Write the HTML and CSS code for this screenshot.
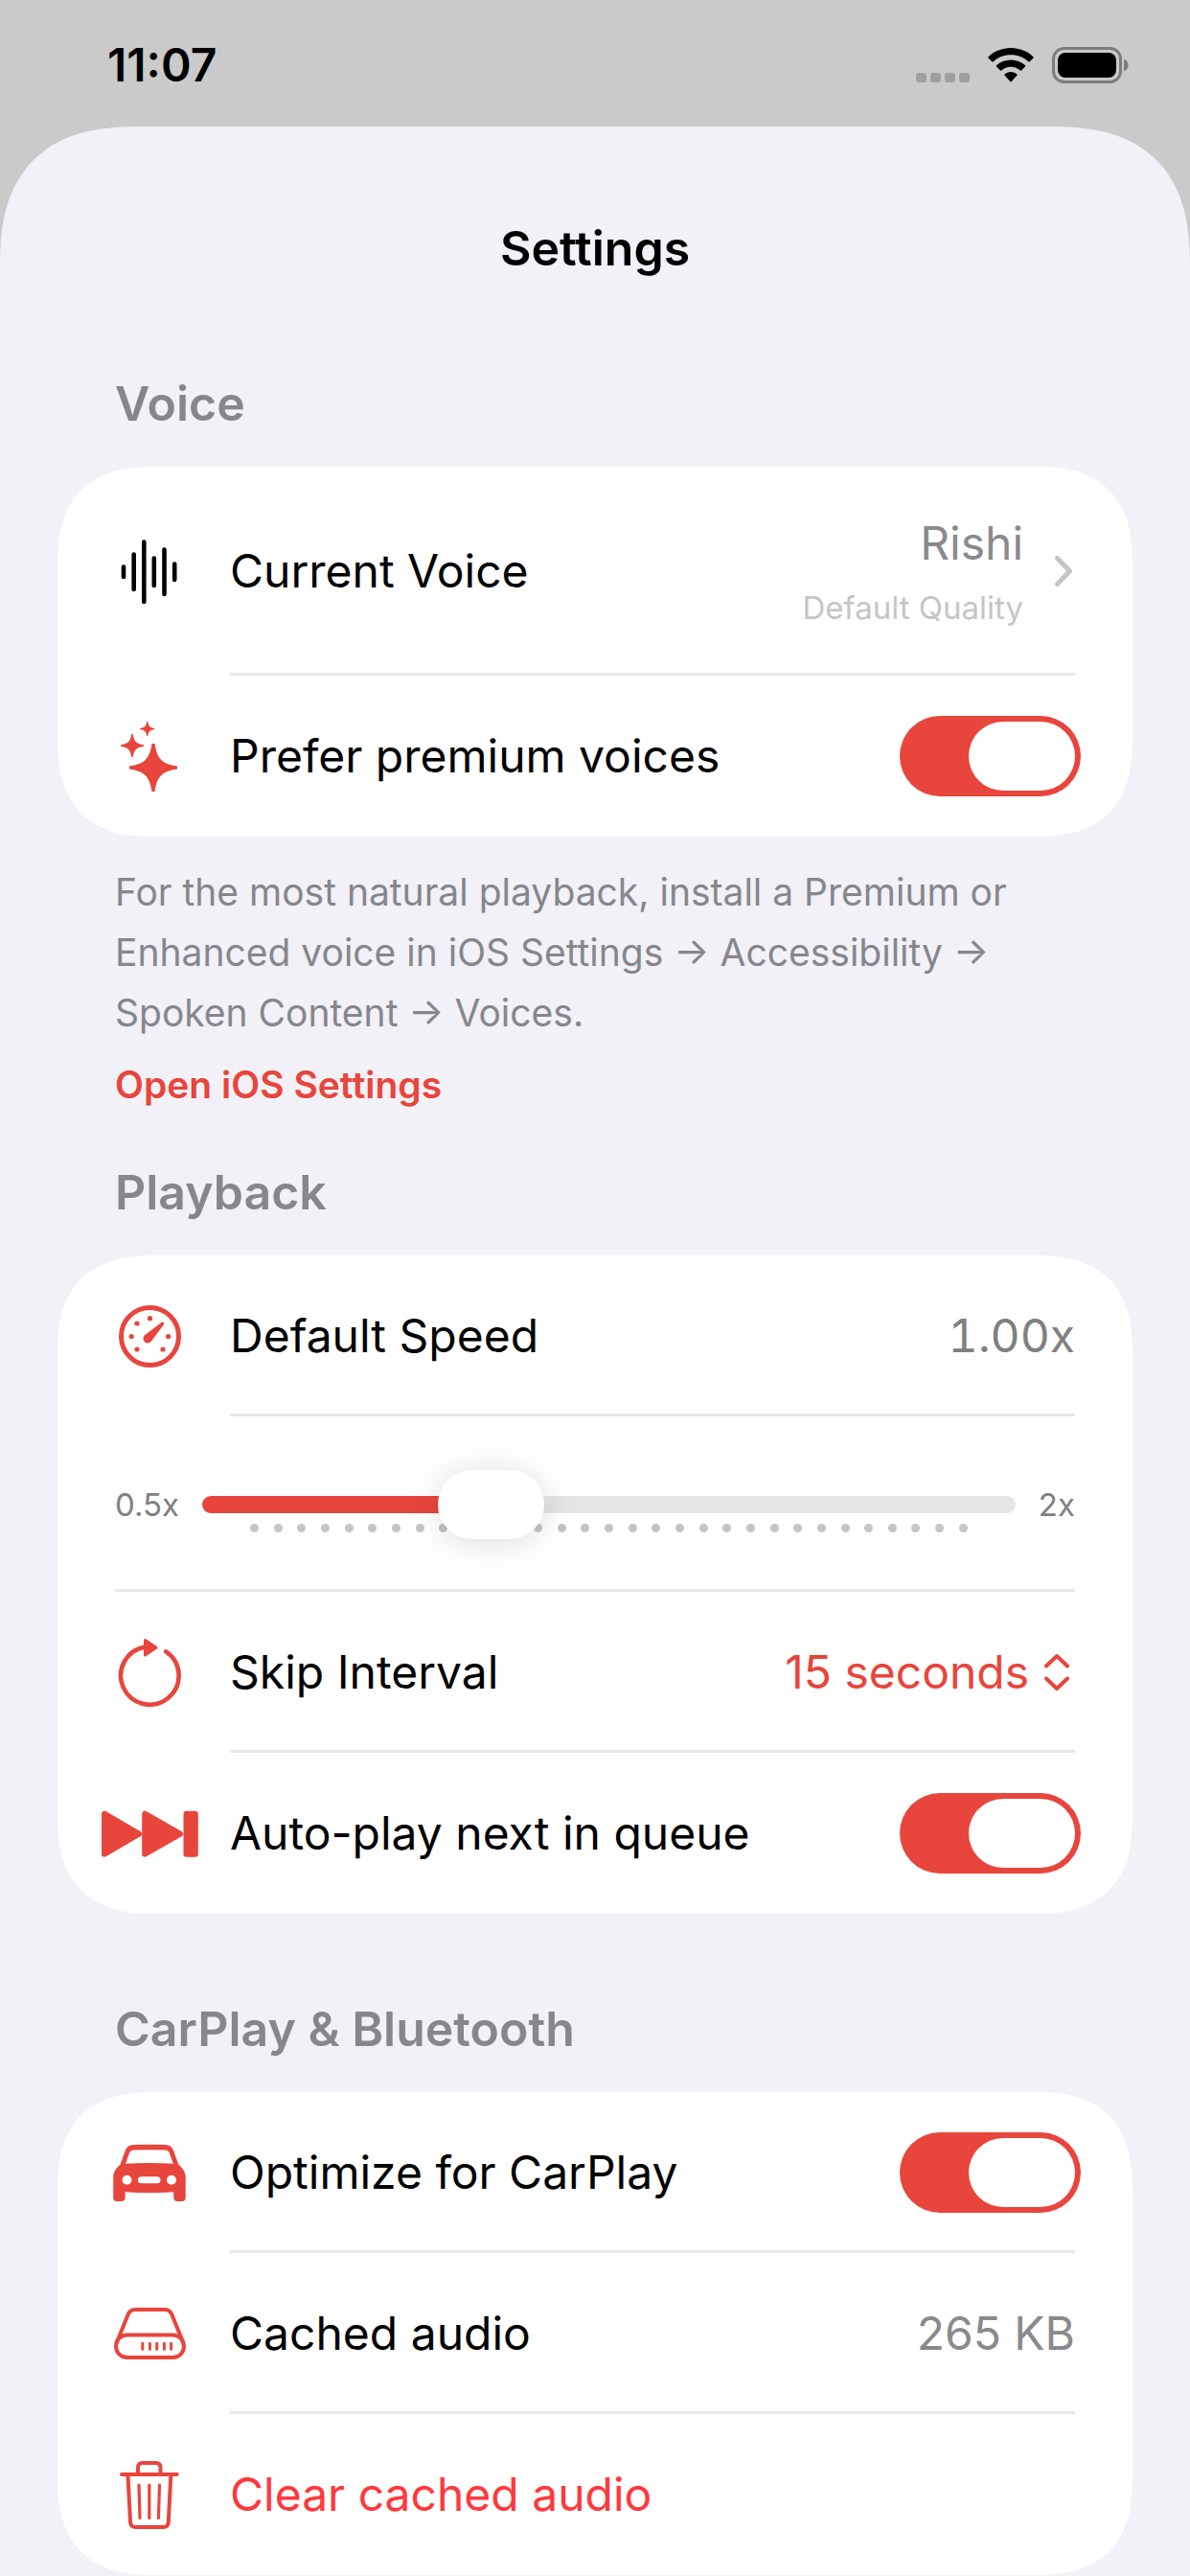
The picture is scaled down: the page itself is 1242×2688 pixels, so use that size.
FILE: index.html
```html
<!DOCTYPE html>
<html lang="en">
<head>
    <meta charset="UTF-8">
    <meta name="viewport" content="width=device-width, initial-scale=1">
    <title>Settings</title>
    <link rel="stylesheet" href="styles.css">
</head>
<body>
    <div class="status-bar">
        <span class="time">11:07</span>
        <div class="status-icons">
            <svg width="56" height="38" viewBox="0 0 56 38" fill="#a0a0a0">
                <rect x="0" y="27" width="11" height="10" rx="3"/>
                <rect x="15" y="27" width="11" height="10" rx="3"/>
                <rect x="30" y="27" width="11" height="10" rx="3"/>
                <rect x="45" y="27" width="11" height="10" rx="3"/>
            </svg>
            <svg width="48" height="38" viewBox="0 0 48 38">
                <path d="M24 1C33 1 41.500 4.500 47.500 10.200Q48 10.800 47.500 11.400L43.700 15.200Q43 15.800 42.300 15.200C37.500 10.800 31 8.200 24 8.200S10.500 10.800 5.700 15.200Q5 15.800 4.300 15.200L.5 11.400Q0 10.800 .5 10.200C6.500 4.500 15 1 24 1Z"/>
                <path d="M24 13.500C29.800 13.500 35 15.700 39 19.300Q39.600 19.900 39 20.500L35 24.500Q34.400 25 33.800 24.500C31.200 22.200 27.800 20.700 24 20.700S16.800 22.200 14.200 24.500Q13.600 25 13 24.500L9 20.500Q8.400 19.900 9 19.300C13 15.700 18.200 13.500 24 13.500Z"/>
                <path d="M24 26C26.500 26 28.700 26.900 30.500 28.400Q31 29 30.500 29.600L24.700 36Q24 36.700 23.300 36L17.500 29.600Q17 29 17.500 28.400C19.300 26.900 21.500 26 24 26Z"/>
            </svg>
            <svg width="80" height="38" viewBox="0 0 80 38">
                <rect x="1.500" y="1.500" width="70" height="35" rx="11" fill="none" stroke="#7c7c7c" stroke-width="3"/>
                <rect x="6" y="6" width="61" height="26" rx="8"/>
                <path d="M75 12.500Q79.500 14.500 79.500 19T75 25.500Z" fill="#7c7c7c"/>
            </svg>
        </div>
    </div>

    <main class="sheet">
        <h1>Settings</h1>

        <section>
            <h2>Voice</h2>
            <div class="card">
                <a class="row row-tall" href="#voice">
                    <svg class="icon" viewBox="0 0 104 80" fill="none" stroke="#000" stroke-width="4.600" stroke-linecap="round">
                        <path d="M25 35.500V46M35.700 22.500V59M46.300 9.500V72M56.800 26.500V55M67.500 17.500V64M78.200 32.500V49"/>
                    </svg>
                    <span class="row-body">
                        <span>Current Voice</span>
                        <span class="voice">
                            <span class="value">Rishi</span>
                            <span class="quality">Default Quality</span>
                        </span>
                        <svg class="chevron" width="22" height="34" viewBox="0 0 22 34" fill="none" stroke="#c5c5c7" stroke-width="5" stroke-linecap="round" stroke-linejoin="round">
                            <path d="M3.500 3.500L16.500 17L3.500 30.500"/>
                        </svg>
                    </span>
                </a>
                <div class="row">
                    <svg class="icon" viewBox="0 0 104 80">
                        <defs>
                            <path id="star" d="M1.500-25C4-9 9-4 25-1.500V1.500C9 4 4 9 1.500 25H-1.500C-4 9-9 4-25 1.500V-1.500C-9-4-4-9-1.500-25Z"/>
                        </defs>
                        <use href="#star" transform="translate(56 52)"/>
                        <use href="#star" transform="translate(34 29) scale(.48)"/>
                        <use href="#star" transform="translate(49.700 11.500) scale(.31)"/>
                    </svg>
                    <div class="row-body">
                        <label for="premium">Prefer premium voices</label>
                        <input class="toggle" id="premium" type="checkbox" role="switch" checked>
                    </div>
                </div>
            </div>
            <div class="note">
                <p>For the most natural playback, install a Premium or Enhanced voice in iOS Settings → Accessibility → Spoken Content → Voices.</p>
                <a href="#ios-settings">Open iOS Settings</a>
            </div>
        </section>

        <section>
            <h2>Playback</h2>
            <div class="card">
                <div class="row">
                    <svg class="icon" viewBox="0 0 104 80">
                        <circle cx="52.500" cy="40.500" r="30" fill="none" stroke="#e8453c" stroke-width="5"/>
                        <circle cx="52.500" cy="21.700" r="2.600"/>
                        <circle cx="39" cy="27" r="2.600"/>
                        <circle cx="33.200" cy="40.500" r="2.600"/>
                        <circle cx="71.600" cy="40.500" r="2.600"/>
                        <circle cx="39" cy="54" r="2.600"/>
                        <circle cx="66" cy="54" r="2.600"/>
                        <path d="M47 39.300L64.800 25.700Q67.600 24.800 67.200 27.800L54 45.500A4.700 4.700 0 1 1 47 39.300Z"/>
                    </svg>
                    <div class="row-body">
                        <label for="speed">Default Speed</label>
                        <output class="value value-number" for="speed">1.00x</output>
                    </div>
                </div>
                <div class="row row-slider">
                    <div class="row-body">
                        <span>0.5x</span>
                        <div class="slider">
                            <div class="ticks">
                                <i></i><i></i><i></i><i></i><i></i><i></i><i></i><i></i><i></i><i></i>
                                <i></i><i></i><i></i><i></i><i></i><i></i><i></i><i></i><i></i><i></i>
                                <i></i><i></i><i></i><i></i><i></i><i></i><i></i><i></i><i></i><i></i>
                                <i></i>
                            </div>
                            <input id="speed" type="range" min="0.5" max="2" step="0.05" value="1">
                        </div>
                        <span>2x</span>
                    </div>
                </div>
                <div class="row">
                    <svg class="icon" viewBox="0 0 104 80">
                        <path d="M69.200 18.300A30.300 30.300 0 1 1 48 13.500" fill="none" stroke="#e8453c" stroke-width="4.600" stroke-linecap="round"/>
                        <path d="M47.500 6.500V22L59 14.300Z" stroke="#e8453c" stroke-width="3" stroke-linejoin="round"/>
                    </svg>
                    <div class="row-body">
                        <label for="skip">Skip Interval</label>
                        <select id="skip">
                            <option selected>15 seconds</option>
                            <option>30 seconds</option>
                        </select>
                        <svg class="updown" width="26" height="40" viewBox="0 0 26 40" fill="none" stroke="#e8453c" stroke-width="4" stroke-linecap="round" stroke-linejoin="round">
                            <path d="M2 13.500L13 3L24 13.500M2 26.500L13 37L24 26.500"/>
                        </svg>
                    </div>
                </div>
                <div class="row">
                    <svg class="icon" viewBox="0 0 104 80" stroke="#e8453c" stroke-width="6" stroke-linejoin="round">
                        <path d="M5 19.700V61.700L41 40.700ZM47.200 19.700V61.700L84 40.700ZM90.500 19.700H99.800V61.700H90.500Z"/>
                    </svg>
                    <div class="row-body">
                        <label for="autoplay">Auto-play next in queue</label>
                        <input class="toggle" id="autoplay" type="checkbox" role="switch" checked>
                    </div>
                </div>
            </div>
        </section>

        <section class="section-last">
            <h2>CarPlay &amp; Bluetooth</h2>
            <div class="card">
                <div class="row">
                    <svg class="icon" viewBox="0 0 104 80">
                        <path fill-rule="evenodd" d="M36 11Q52 10.300 68 11C73 11.300 75.500 13 77 17L82.500 32C87 35.500 89.700 39.500 89.700 45V66Q89.700 70 86 70H81Q77.200 70 77.200 66V60.300Q52 62.300 26.600 60.300V66Q26.600 70 22.800 70H17.900Q14.200 70 14.200 66V45C14.200 39.500 17 35.500 21.300 32L26.800 17C28.300 13 31 11.300 36 11ZM36.500 16.500C33 16.700 31.700 17.600 30.800 20.300L27 30.800Q52 29.200 76.800 30.800L73 20.300C72.200 17.600 71 16.700 67.500 16.500Q52 15.900 36.500 16.500ZM28.500 42.700A5 5 0 1 0 28.500 52.700A5 5 0 1 0 28.500 42.700ZM75 42.700A5 5 0 1 0 75 52.700A5 5 0 1 0 75 42.700ZM43.400 44.200A3.500 3.500 0 0 0 43.400 51.200H60A3.500 3.500 0 0 0 60 44.200Z"/>
                    </svg>
                    <div class="row-body">
                        <label for="carplay">Optimize for CarPlay</label>
                        <input class="toggle" id="carplay" type="checkbox" role="switch" checked>
                    </div>
                </div>
                <div class="row">
                    <svg class="icon" viewBox="0 0 104 80" fill="none" stroke="#e8453c" stroke-width="4" stroke-linecap="round">
                        <rect x="17" y="41.500" width="71" height="23.500" rx="11.700"/>
                        <path d="M18 49L29.500 20.500Q31.700 15 37 15H68Q73.300 15 75.500 20.500L87 49"/>
                        <path stroke-width="3" d="M44.800 50.200V56.200M52.400 50.200V56.200M59.700 50.200V56.200M67.400 50.200V56.200M74.600 50.200V56.200"/>
                    </svg>
                    <div class="row-body">
                        <span>Cached audio</span>
                        <span class="value">265 KB</span>
                    </div>
                </div>
                <button class="row" type="button">
                    <svg class="icon" viewBox="0 0 104 80" fill="none" stroke="#e8453c" stroke-width="4" stroke-linecap="round">
                        <path d="M23 19H80.700M40 18V12Q40 7 45 7H58.500Q63.500 7 63.500 12V18"/>
                        <path d="M29.500 20L32 68.500Q32.300 74 37.500 74H66.500Q71.500 74 71.800 68.500L74.300 20"/>
                        <path stroke-width="3.200" d="M41 30L42 64.500M51.800 30V64.500M62.500 30L61.400 64.500"/>
                    </svg>
                    <span class="row-body danger">Clear cached audio</span>
                </button>
            </div>
        </section>
    </main>
    <script>
        var oSpeed=document.getElementById("speed");
        var oValue=document.getElementsByTagName("output")[0];
        oSpeed.oninput=function () {
            var rate=(oSpeed.value-oSpeed.min)/(oSpeed.max-oSpeed.min);
            oSpeed.style.setProperty("--fill",rate*100+"%");
            oValue.value=Number(oSpeed.value).toFixed(2)+"x";
        };
        oSpeed.oninput();
    </script>
</body>
</html>
```
FILE: styles.css
```css
*{
    box-sizing: border-box;
    margin: 0;
    padding: 0;
}
body{
    background: #cacaca;
    color: #000;
    font: 48px/60px Inter, "Liberation Sans", sans-serif;
    min-height: 100vh;
    display: flex;
    flex-direction: column;
}
a{
    color: inherit;
    text-decoration: none;
}
svg{
    display: block;
    flex: none;
}

/* status bar */
.status-bar{
    height: 132px;
    padding: 4px 64px 0 112px;
    display: flex;
    align-items: center;
    justify-content: space-between;
}
.time{
    font-size: 48px;
    font-weight: 600;
}
.status-icons{
    display: flex;
    gap: 19px;
}

/* sheet */
.sheet{
    flex: 1;
    background: #f2f1f7;
    border-radius: 148px 148px 0 0;
    corner-shape: superellipse(1.36);
    padding: 97px 60px 0;
}
h1{
    font-size: 50px;
    font-weight: 600;
    text-align: center;
    margin-bottom: 102px;
}
h2{
    color: #86868b;
    font-size: 50px;
    font-weight: 600;
    margin: 0 60px 36px;
}
.card{
    background: #fff;
    border-radius: 104px;
    corner-shape: superellipse(1.36);
    overflow: hidden;
}
.section-last{
    padding-top: 90px;
}
.note{
    color: #86868b;
    font-size: 39px;
    line-height: 63px;
    padding: 26px 60px 51px;
}
.note a{
    display: block;
    margin-top: 12px;
    color: #e8453c;
    font-weight: 600;
}

/* rows */
.row{
    width: 100%;
    display: flex;
    align-items: stretch;
    gap: 32px;
    padding: 0 60px 0 44px;
    border: 0;
    background: none;
    font: inherit;
    text-align: left;
}
.icon{
    width: 104px;
    height: 80px;
    align-self: center;
    fill: #e8453c;
}
.icon[fill="none"]{
    fill: none;
}
.row-body{
    flex: 1;
    min-height: 168px;
    display: flex;
    align-items: center;
    border-top: 3px solid transparent;
    border-bottom: 3px solid #e8e8e8;
}
.row:last-child .row-body{
    border-bottom-color: transparent;
}
.row-body > :first-child{
    margin-right: auto;
}
.row-tall .row-body{
    min-height: 218px;
}
.value{
    color: #8a8a8e;
}
.value-number{
    color: #808080;
    font-variant-numeric: tabular-nums;
}
.danger{
    color: #ff383c;
}
.voice{
    display: flex;
    flex-direction: column;
    align-items: flex-end;
    gap: 16px;
}
.quality{
    color: #c5c5c7;
    font-size: 33px;
    line-height: 42px;
}
.chevron{
    margin-left: 32px;
}

/* switch */
.toggle{
    appearance: none;
    flex: none;
    width: 189px;
    height: 84px;
    margin-right: -6px;
    padding: 6px;
    border-radius: 42px;
    background: #e4e4e6;
}
.toggle::before{
    content: "";
    display: block;
    width: 111px;
    height: 72px;
    border-radius: 36px;
    background: #fff;
}
.toggle:checked{
    background: #e8453c;
}
.toggle:checked::before{
    margin-left: auto;
}

/* speed slider */
.row-slider{
    padding-left: 60px;
    color: #808080;
    font-size: 33px;
}
.row-slider .row-body{
    min-height: 183px;
    gap: 24px;
}
.row-slider .row-body > :first-child{
    margin-right: 0;
}
.slider{
    flex: 1;
    position: relative;
}
.ticks{
    position: absolute;
    left: 50px;
    right: 50px;
    top: 56px;
    display: flex;
    justify-content: space-between;
}
.ticks i{
    width: 9px;
    height: 9px;
    border-radius: 50%;
    background: #c5c5c7;
}
.slider input{
    --fill: 33%;
    appearance: none;
    display: block;
    position: relative;
    width: 100%;
    height: 72px;
    background: none;
}
.slider input::-webkit-slider-runnable-track{
    height: 18px;
    border-radius: 9px;
    background: linear-gradient(to right, #e8453c var(--fill), #e5e5e5 var(--fill));
}
.slider input::-webkit-slider-thumb{
    appearance: none;
    width: 111px;
    height: 72px;
    margin-top: -27px;
    border-radius: 36px;
    background: #fff;
    box-shadow: 0 3px 36px rgba(0, 0, 0, .14);
}

/* skip interval */
select{
    appearance: none;
    border: 0;
    background: none;
    color: #e8453c;
    font: inherit;
    text-align-last: right;
}
.updown{
    margin: 0 6px 0 16px;
}
```
